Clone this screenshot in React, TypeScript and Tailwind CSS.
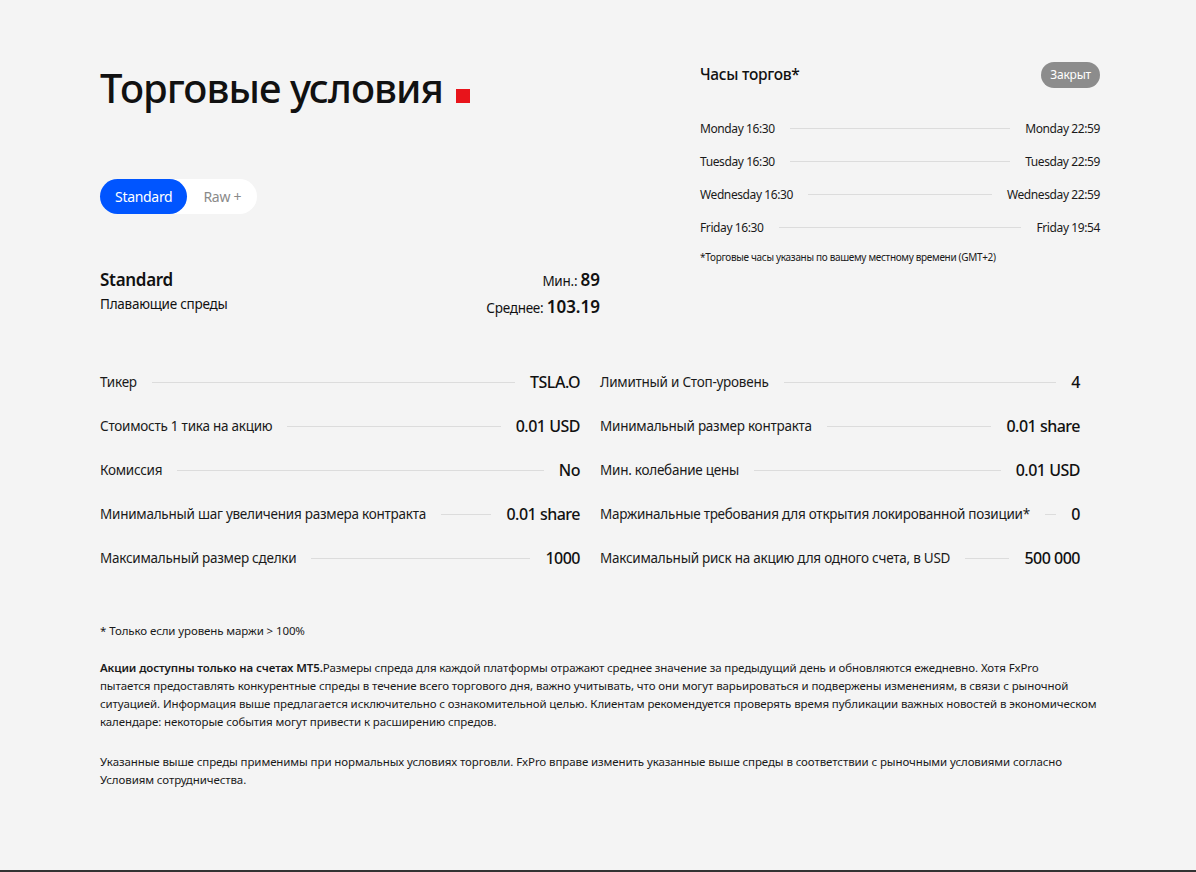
import React from "react";

const hours = [
  ["Monday 16:30", "Monday 22:59"],
  ["Tuesday 16:30", "Tuesday 22:59"],
  ["Wednesday 16:30", "Wednesday 22:59"],
  ["Friday 16:30", "Friday 19:54"],
];

const leftSpecs = [
  ["Тикер", "TSLA.O"],
  ["Стоимость 1 тика на акцию", "0.01 USD"],
  ["Комиссия", "No"],
  ["Минимальный шаг увеличения размера контракта", "0.01 share"],
  ["Максимальный размер сделки", "1000"],
];

const rightSpecs = [
  ["Лимитный и Стоп-уровень", "4"],
  ["Минимальный размер контракта", "0.01 share"],
  ["Мин. колебание цены", "0.01 USD"],
  ["Маржинальные требования для открытия локированной позиции*", "0"],
  ["Максимальный риск на акцию для одного счета, в USD", "500 000"],
];

function SpecRow({ label, value }: { label: string; value: string }) {
  return (
    <div className="flex h-[44px] items-center">
      <span className="text-[13.5px] tracking-[-0.25px] text-[#1a1a1a] whitespace-nowrap">{label}</span>
      <span className="mx-[15px] h-px flex-1 bg-[#dcdcdc]" />
      <span className="text-[16px] font-medium tracking-[-0.5px] text-[#111] whitespace-nowrap">{value}</span>
    </div>
  );
}

export default function App() {
  return (
    <div
      className="w-full bg-[#f4f4f4] text-[#111]"
      style={{ fontFamily: '"Noto Sans", "Open Sans", sans-serif' }}
    >
      <div className="h-[870px] pt-[62px]">
        <div className="ml-[100px] w-[1000px]">
          <div className="flex">
            <div className="w-[600px]">
              <h1 className="flex items-end text-[40px] font-medium leading-[52px] tracking-[-0.95px]">
                Торговые условия
                <span className="mb-[11px] ml-[13px] inline-block h-[14px] w-[14px] bg-[#e8141b]" />
              </h1>
              <div className="mt-[65px] inline-flex h-[35px] rounded-full bg-white">
                <span className="flex items-center rounded-full bg-[#0055ff] px-[15px] text-[14px] tracking-[-0.3px] text-white">
                  Standard
                </span>
                <span className="flex items-center px-[16px] text-[14px] tracking-[-0.3px] text-[#8a8a8a]">Raw +</span>
              </div>
              <div className="mt-[53px] flex w-[500px] justify-between">
                <div>
                  <div className="text-[17px] font-semibold leading-[26px] tracking-[-0.3px]">Standard</div>
                  <div className="mt-[1px] text-[13.5px] leading-[20px] tracking-[-0.25px]">Плавающие спреды</div>
                </div>
                <div className="text-right">
                  <div className="leading-[26px]">
                    <span className="text-[13.5px] tracking-[-0.25px]">Мин.: </span>
                    <span className="text-[17px] font-semibold">89</span>
                  </div>
                  <div className="leading-[26px]">
                    <span className="text-[13.5px] tracking-[-0.25px]">Среднее: </span>
                    <span className="text-[17px] font-semibold">103.19</span>
                  </div>
                </div>
              </div>
            </div>
            <div className="w-[400px]">
              <div className="flex items-center justify-between">
                <span className="text-[15.5px] font-medium tracking-[-0.3px]">Часы торгов*</span>
                <span className="flex h-[26px] items-center rounded-full bg-[#8c8c8c] px-[9px] text-[12px] tracking-[-0.2px] text-white">
                  Закрыт
                </span>
              </div>
              <div className="mt-[24px]">
                {hours.map(([a, b]) => (
                  <div key={a} className="flex h-[33px] items-center text-[12px] tracking-[-0.4px] text-[#1a1a1a]">
                    <span className="whitespace-nowrap">{a}</span>
                    <span className="mx-[15px] h-px flex-1 bg-[#dcdcdc]" />
                    <span className="whitespace-nowrap">{b}</span>
                  </div>
                ))}
              </div>
              <div className="mt-[6px] text-[10px] tracking-[-0.32px] text-[#1a1a1a]">
                *Торговые часы указаны по вашему местному времени (GMT+2)
              </div>
            </div>
          </div>

          <div className="mt-[39px] grid w-[980px] grid-cols-2 gap-x-[20px]">
            <div>
              {leftSpecs.map(([l, v]) => (
                <SpecRow key={l} label={l} value={v} />
              ))}
            </div>
            <div>
              {rightSpecs.map(([l, v]) => (
                <SpecRow key={l} label={l} value={v} />
              ))}
            </div>
          </div>

          <div className="mt-[42px] text-[11.5px] leading-[18px] tracking-[-0.1px] text-[#1a1a1a]">
            <p>* Только если уровень маржи &gt; 100%</p>
            <p className="mt-[19px] whitespace-nowrap">
              <b className="font-semibold">Акции доступны только на счетах MT5.</b>Размеры спреда для каждой платформы отражают среднее значение за предыдущий день и обновляются ежедневно. Хотя FxPro
              <br />
              пытается предоставлять конкурентные спреды в течение всего торгового дня, важно учитывать, что они могут варьироваться и подвержены изменениям, в связи с рыночной
              <br />
              ситуацией. Информация выше предлагается исключительно с ознакомительной целью. Клиентам рекомендуется проверять время публикации важных новостей в экономическом
              <br />
              календаре: некоторые события могут привести к расширению спредов.
            </p>
            <p className="mt-[22px] whitespace-nowrap">
              Указанные выше спреды применимы при нормальных условиях торговли. FxPro вправе изменить указанные выше спреды в соответствии с рыночными условиями согласно
              <br />
              Условиям сотрудничества.
            </p>
          </div>
        </div>
      </div>
      <div className="h-[2px] w-full bg-[#333]" />
    </div>
  );
}
